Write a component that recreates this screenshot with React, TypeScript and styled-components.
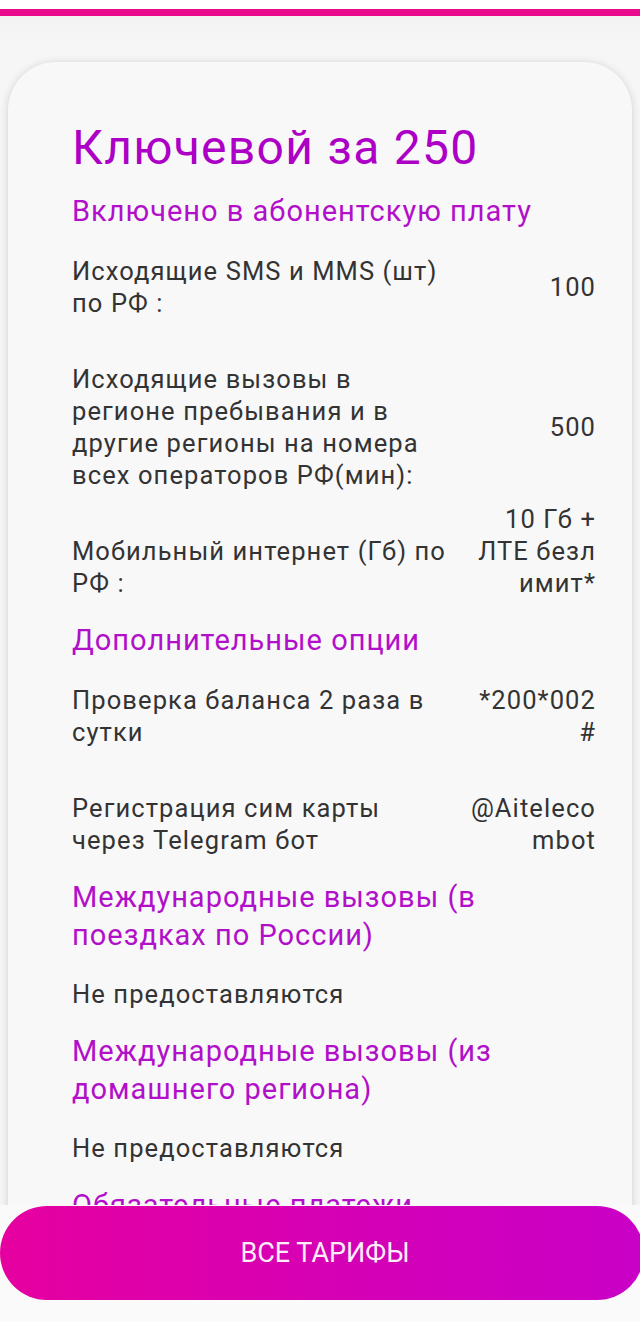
import React from "react";
import styled, { createGlobalStyle } from "styled-components";

const GlobalStyle = createGlobalStyle`
  html, body {
    margin: 0;
    padding: 0;
    background: #ffffff;
  }
  body {
    font-family: Roboto, "Noto Sans", "Liberation Sans", sans-serif;
  }
  * { box-sizing: border-box; }
`;

const Screen = styled.div`
  width: 640px;
  height: 1322px;
  display: flex;
  flex-direction: column;
  overflow: hidden;
  background: #f9f9f9;
`;

const StatusGap = styled.div`
  height: 9px;
  background: #ffffff;
  flex: none;
`;

const AccentLine = styled.div`
  height: 7px;
  background: #ea0a8c;
  flex: none;
`;

const Scroll = styled.div`
  flex: none;
  height: 1189px;
  overflow: hidden;
  background: linear-gradient(#f2f2f2, #f6f6f6 30px, #f6f6f6);
  padding: 46px 8px 0 8px;
`;

const Card = styled.div`
  background: #f8f8f8;
  border-radius: 48px 48px 0 0;
  box-shadow: 0 1px 8px rgba(0, 0, 0, 0.16);
  padding: 57px 36px 40px 64px;
  display: flex;
  flex-direction: column;
  min-height: 1400px;
`;

const Title = styled.h1`
  margin: 0 0 15px 0;
  font-size: 48px;
  line-height: 58px;
  letter-spacing: 1.3px;
  font-weight: 400;
  color: #ad00c6;
`;

const SectionTitle = styled.h2`
  margin: 0 0 3px 0;
  font-size: 29px;
  line-height: 38px;
  letter-spacing: 1px;
  font-weight: 400;
  color: #b10fc9;
`;

const Row = styled.div<{ $tall?: boolean }>`
  display: flex;
  align-items: ${(p) => (p.$tall ? "flex-end" : "center")};
  margin: ${(p) => (p.$tall ? "-10px 0 22px 0" : "22px 0")};
  font-size: 25.5px;
  line-height: 32px;
  letter-spacing: 1.1px;
  color: #333333;
`;

const Label = styled.div`
  flex: none;
  width: 374px;
`;

const Value = styled.div`
  flex: 1;
  min-width: 0;
  text-align: right;
  white-space: nowrap;
`;

const Plain = styled.div`
  margin: 21px 0 22px 0;
  font-size: 25.5px;
  line-height: 32px;
  letter-spacing: 1.1px;
  color: #333333;
`;

const Bottom = styled.div`
  flex: 1;
  background: #fafafa;
  padding-top: 1px;
`;

const MainButton = styled.button`
  display: flex;
  align-items: center;
  justify-content: center;
  width: 644px;
  height: 94px;
  border: none;
  border-radius: 47px;
  background: linear-gradient(90deg, #e600a0 0%, #d600b4 50%, #c900c7 100%);
  color: #fbeefa;
  font-family: Roboto, "Noto Sans", sans-serif;
  font-size: 27px;
  font-weight: 400;
  letter-spacing: 0;
  padding: 0 0 0 6px;
  cursor: pointer;
`;

type Item = { label: string; value: string[]; tall?: boolean };

const included: Item[] = [
  { label: "Исходящие SMS и MMS (шт) по РФ :", value: ["100"] },
  {
    label:
      "Исходящие вызовы в регионе пребывания и в другие регионы на номера всех операторов РФ(мин):",
    value: ["500"],
  },
  {
    label: "Мобильный интернет (Гб) по РФ :",
    value: ["10 Гб +", "ЛТЕ безл", "имит*"],
    tall: true,
  },
];

const extra: Item[] = [
  { label: "Проверка баланса 2 раза в сутки", value: ["*200*002", "#"] },
  { label: "Регистрация сим карты через Telegram бот", value: ["@Aiteleco", "mbot"] },
];

const renderRows = (items: Item[]) =>
  items.map((it) => (
    <Row key={it.label} $tall={it.tall}>
      <Label>{it.label}</Label>
      <Value>
        {it.value.map((v, i) => (
          <React.Fragment key={i}>
            {i > 0 && <br />}
            {v}
          </React.Fragment>
        ))}
      </Value>
    </Row>
  ));

export default function App() {
  return (
    <>
      <GlobalStyle />
      <Screen>
        <StatusGap />
        <AccentLine />
        <Scroll>
          <Card>
            <Title>Ключевой за 250</Title>
            <SectionTitle>Включено в абонентскую плату</SectionTitle>
            {renderRows(included)}
            <SectionTitle>Дополнительные опции</SectionTitle>
            {renderRows(extra)}
            <SectionTitle>Международные вызовы (в поездках по России)</SectionTitle>
            <Plain>Не предоставляются</Plain>
            <SectionTitle>Международные вызовы (из домашнего региона)</SectionTitle>
            <Plain>Не предоставляются</Plain>
            <SectionTitle>Обязательные платежи</SectionTitle>
            <Plain>Нет</Plain>
          </Card>
        </Scroll>
        <Bottom>
          <MainButton>ВСЕ ТАРИФЫ</MainButton>
        </Bottom>
      </Screen>
    </>
  );
}
